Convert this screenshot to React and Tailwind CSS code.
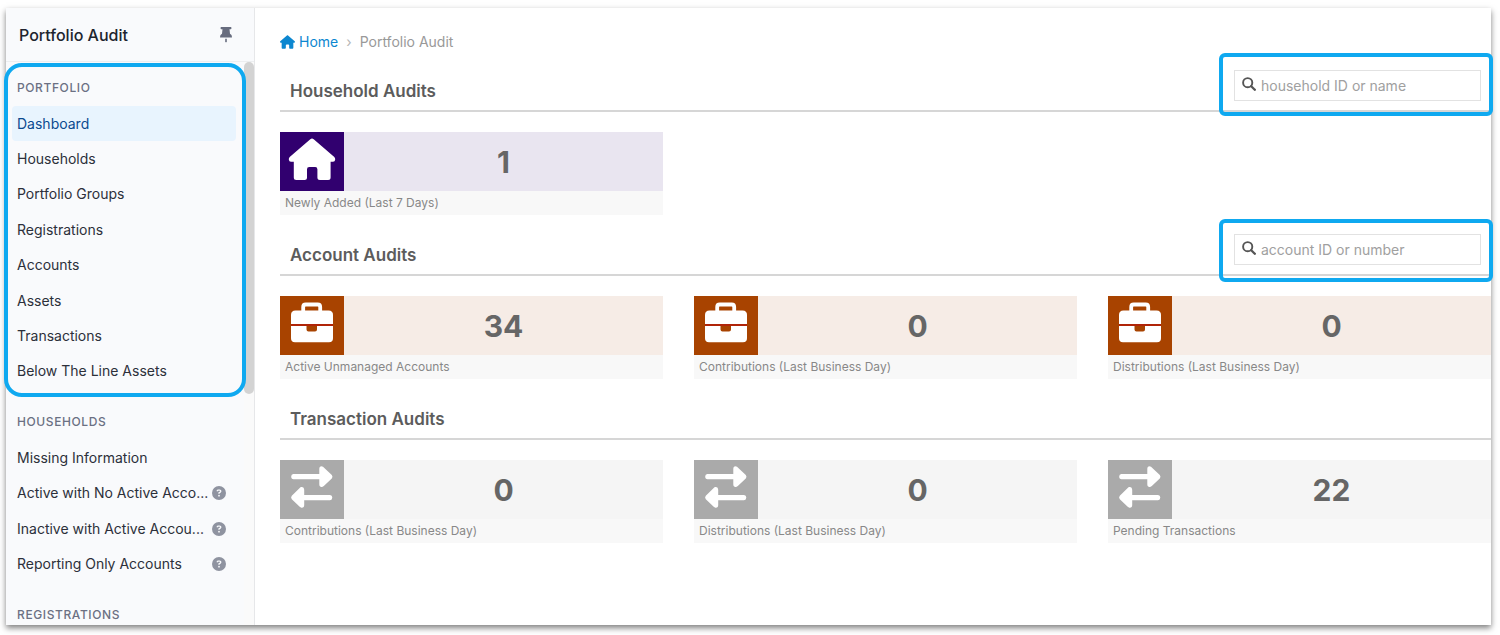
import React from "react";
import { FaHouse, FaCircleQuestion } from "react-icons/fa6";

const portfolioLinks = [
  "Dashboard",
  "Households",
  "Portfolio Groups",
  "Registrations",
  "Accounts",
  "Assets",
  "Transactions",
  "Below The Line Assets",
];

const householdLinks = [
  { label: "Missing Information" },
  { label: "Active with No Active Acco...", help: true },
  { label: "Inactive with Active Accou...", help: true },
  { label: "Reporting Only Accounts", help: true },
];

function PinIcon() {
  return (
    <svg viewBox="0 0 12 16" className="h-4 w-3" fill="#676c7e" aria-hidden="true">
      <path d="M1.2 0h9.6q.6 0 .6.6v1q0 .6-.6.6H9.5l.5 4.6q2 .9 2 3.2 0 .6-.6.6H.6Q0 10.600 0 10q0-2.300 2-3.200l.5-4.600H1.200Q.6 2.200.6 1.600v-1Q.6 0 1.200 0Z" />
      <path d="M5.200 11.800h1.600v2.400L6 15.800l-.8-1.600Z" />
    </svg>
  );
}

function SearchIcon() {
  return (
    <svg viewBox="0 0 14 14" className="h-3.5 w-3.5" fill="none" stroke="#555" aria-hidden="true">
      <circle cx="5.700" cy="5.700" r="4.600" strokeWidth="1.900" />
      <path d="M9.200 9.200 12.800 12.800" strokeWidth="2.300" strokeLinecap="round" />
    </svg>
  );
}

function HouseTile() {
  return (
    <svg viewBox="0 0 64 59" className="h-[59px] w-16" fill="#fff" aria-hidden="true">
      <path d="M30.300 7.200q1.700-1.500 3.400 0L54.300 25q1 1 .9 2.600-.2 2.200-2.200 2.200h-2.400v15.700q0 2.500-2.500 2.500h-8.200q-2.500 0-2.500-2.500v-8.300q0-2.200-2.200-2.200h-6q-2.200 0-2.200 2.200v8.300q0 2.500-2.500 2.500h-8.200q-2.500 0-2.500-2.500V29.800H11q-2 0-2.200-2.200Q8.700 26 9.700 25Z" />
    </svg>
  );
}

function BriefcaseTile() {
  return (
    <svg viewBox="0 0 64 59" className="h-[59px] w-16" aria-hidden="true">
      <path d="M23.200 16V11q0-2.500 2.500-2.500h12q2.500 0 2.500 2.500V16" fill="none" stroke="#fff" strokeWidth="3.800" />
      <path d="M15.500 14.500h33q4.500 0 4.500 4.500V28H11v-9q0-4.500 4.500-4.500Z" fill="#fff" />
      <path d="M11 30h15.500v3.500q0 2 2 2h6.500q2 0 2-2v-3.500h16v12.300q0 4-4 4H15q-4 0-4-4Z" fill="#fff" />
      <path d="M11 29h42" stroke="#b31a0b" strokeWidth="1.500" />
    </svg>
  );
}

function ArrowsTile() {
  return (
    <svg viewBox="0 0 64 59" className="h-[59px] w-16" fill="#fff" aria-hidden="true">
      <path d="M13.500 13.900h25.800V9q0-3 2.800-2.600 1 .2 1.700 1L51.800 15q1.400 1.700 0 3.400l-8 7.600q-.7.700-1.700.9-2.800.300-2.800-2.600v-5.100h-25.800q-2.300 0-2.300-2.700t2.300-2.600Z" />
      <path d="M50 34.900h-25.800v-5.200q0-3-2.800-2.600-1 .2-1.700 1l-7.900 7.700q-1.400 1.700 0 3.400l7.900 7.600q.7.700 1.700.9 2.800.300 2.800-2.600v-4.900h25.800q2.300 0 2.300-2.600t-2.300-2.700Z" />
    </svg>
  );
}

const themes = {
  household: { tile: "bg-[#31006f]", body: "bg-[#e9e5f0]", Icon: HouseTile },
  account: { tile: "bg-[#a84300]", body: "bg-[#f6ece6]", Icon: BriefcaseTile },
  transaction: { tile: "bg-[#aaaaaa]", body: "bg-[#f5f5f5]", Icon: ArrowsTile },
};

const sections = [
  {
    title: "Household Audits",
    theme: "household",
    search: { id: "household-search", placeholder: "household ID or name", highlight: "-top-[17px] -bottom-[15px]" },
    cards: [{ value: 1, label: "Newly Added (Last 7 Days)" }],
  },
  {
    title: "Account Audits",
    theme: "account",
    search: { id: "account-search", placeholder: "account ID or number", highlight: "-top-[15px] -bottom-[17px]" },
    cards: [
      { value: 34, label: "Active Unmanaged Accounts" },
      { value: 0, label: "Contributions (Last Business Day)" },
      { value: 0, label: "Distributions (Last Business Day)" },
    ],
  },
  {
    title: "Transaction Audits",
    theme: "transaction",
    cards: [
      { value: 0, label: "Contributions (Last Business Day)" },
      { value: 0, label: "Distributions (Last Business Day)" },
      { value: 22, label: "Pending Transactions" },
    ],
  },
];

function GroupHeading({ children }) {
  return (
    <h2 className="flex h-9 shrink-0 items-center px-[5px] text-xs font-medium tracking-wider text-[#6b7083] uppercase">
      {children}
    </h2>
  );
}

function Sidebar() {
  return (
    <aside className="relative flex w-[249px] shrink-0 flex-col border-r border-[#e6e7e9] bg-[#f9fafc]">
      <header className="flex h-[54px] shrink-0 items-center justify-between border-b border-[#eceef0] pr-[22px] pl-[13px]">
        <h1 className="text-base font-medium text-[#20242e]">Portfolio Audit</h1>
        <button type="button" aria-label="Pin menu">
          <PinIcon />
        </button>
      </header>
      <div className="flex min-h-0 flex-1 overflow-hidden">
        <nav className="flex min-w-0 flex-1 flex-col pt-2 pr-2 pl-1.5" aria-label="Portfolio Audit">
          <GroupHeading>Portfolio</GroupHeading>
          <ul className="mb-[15px] grid h-[283px] shrink-0 auto-rows-fr">
            {portfolioLinks.map((label, i) => (
              <li key={label} className="grid">
                <a
                  href="#"
                  className={
                    i === 0
                      ? "flex items-center rounded bg-[#e8f4fe] px-[5px] text-sm text-[#0b4a8f]"
                      : "flex items-center rounded px-[5px] text-sm text-[#2c303a]"
                  }
                >
                  {label}
                </a>
              </li>
            ))}
          </ul>
          <GroupHeading>Households</GroupHeading>
          <ul className="mb-[15px] grid h-[142px] shrink-0 auto-rows-fr">
            {householdLinks.map(({ label, help }) => (
              <li key={label} className="flex items-center justify-between pr-2.5 pl-[5px]">
                <a href="#" className="text-sm whitespace-nowrap text-[#2c303a]">
                  {label}
                </a>
                {help && (
                  <button type="button" aria-label={"About " + label}>
                    <FaCircleQuestion className="h-3.5 w-3.5 text-[#8f93a0]" />
                  </button>
                )}
              </li>
            ))}
          </ul>
          <GroupHeading>Registrations</GroupHeading>
        </nav>
        <div className="w-2.5 shrink-0 bg-[#fafafa]">
          <div className="h-[332px] rounded-full bg-[#d3d3d3]" />
        </div>
      </div>
      <div className="pointer-events-none absolute top-[55px] -left-0.5 h-[334px] w-[242px] rounded-[18px] border-4 border-[#0fa9f0]" />
    </aside>
  );
}

function SearchBox({ id, placeholder, highlight }) {
  return (
    <div className="relative mr-2.5 w-[247px]">
      <label htmlFor={id} aria-label={placeholder} className="absolute top-[7px] left-2">
        <SearchIcon />
      </label>
      <input
        id={id}
        type="text"
        placeholder={placeholder}
        className="block h-[31px] w-full border border-[#e2e2e2] bg-white pr-2 pl-[26px] text-sm text-[#555] placeholder:text-[#a0a0a0]"
      />
      <div className={"pointer-events-none absolute -right-3 -left-[15px] rounded-md border-4 border-[#0fa9f0] " + highlight} />
    </div>
  );
}

function AuditCard({ value, label, theme }) {
  const { tile, body, Icon } = themes[theme];
  return (
    <article className="bg-[#f8f8f8]">
      <div className={"flex " + body}>
        <div className={"shrink-0 " + tile}>
          <Icon />
        </div>
        <p className="flex flex-1 items-center justify-center text-3xl font-bold text-[#666]">{value}</p>
      </div>
      <p className="px-[5px] text-xs leading-6 text-[#888]">{label}</p>
    </article>
  );
}

export default function App() {
  return (
    <div className="h-screen bg-white pt-2 pr-[9px] pb-2.5 pl-1.5 font-[Inter,sans-serif]">
      <div className="flex h-full bg-white shadow-[0_3px_6px_rgba(0,0,0,0.5)]">
        <Sidebar />
        <main className="min-w-0 flex-1 pl-[25px]">
          <nav aria-label="Breadcrumb" className="flex h-[62px] items-center pt-1.5 text-sm">
            <a href="#" className="flex items-center gap-1 text-[#0c87d0]">
              <FaHouse className="h-3.5 w-[15px]" />
              Home
            </a>
            <span className="px-2 text-[#b5b5b5]">›</span>
            <span className="text-[#999]">Portfolio Audit</span>
          </nav>
          {sections.map((section) => (
            <section key={section.title} className="mb-[19px]">
              <div className="mb-5 flex h-[42px] items-start justify-between border-b-2 border-[#d6d6d6]">
                <h2 className="pl-2.5 text-[17px] leading-[42px] font-semibold text-[#5c5c5c]">{section.title}</h2>
                {section.search && <SearchBox {...section.search} />}
              </div>
              <div className="grid grid-cols-3 gap-[31px]">
                {section.cards.map((card) => (
                  <AuditCard key={card.label} {...card} theme={section.theme} />
                ))}
              </div>
            </section>
          ))}
        </main>
      </div>
    </div>
  );
}
